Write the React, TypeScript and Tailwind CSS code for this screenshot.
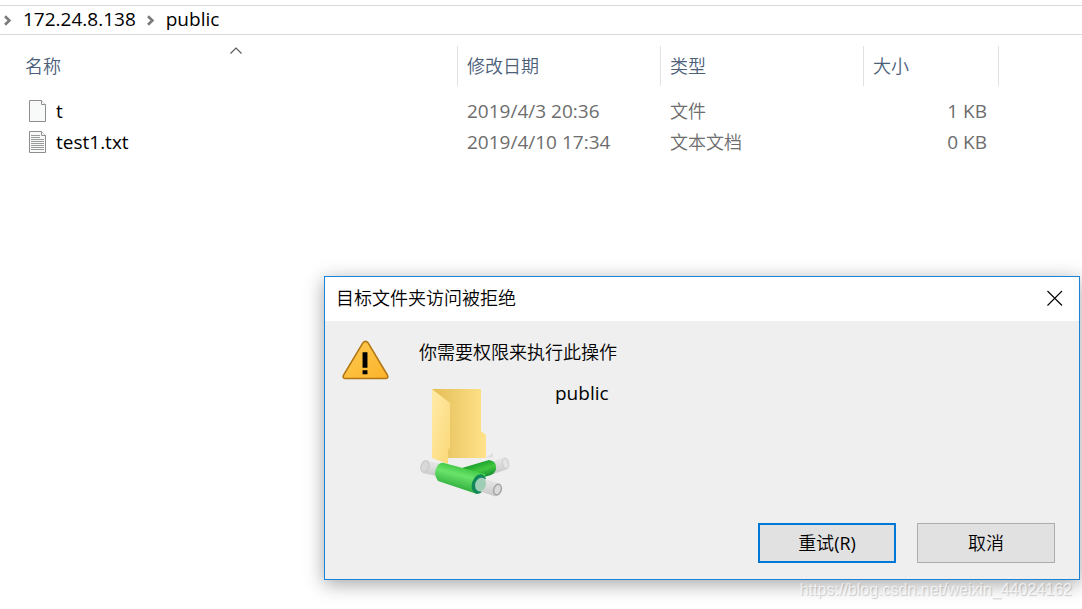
import React from "react";

type FileRow = {
  name: string;
  modified: string;
  kind: string;
  size: string;
  lined: boolean;
};

const files: FileRow[] = [
  { name: "t", modified: "2019/4/3 20:36", kind: "文件", size: "1 KB", lined: false },
  { name: "test1.txt", modified: "2019/4/10 17:34", kind: "文本文档", size: "0 KB", lined: true },
];

function Chevron() {
  return (
    <svg className="h-3 w-2 shrink-0" viewBox="0 0 8 12" fill="none" aria-hidden="true">
      <path d="M1 2.2 L5.4 6.5 L1 10.8" stroke="#7b7b7b" strokeWidth="2.6" />
    </svg>
  );
}

function FileIcon({ lined }: { lined: boolean }) {
  return (
    <svg className="h-[22px] w-[18px] shrink-0" viewBox="0 0 18 22" fill="none" aria-hidden="true">
      <path d="M1.5 .5 H13.5 L17.5 4.5 V21.5 H1.5 Z" fill="#f8f9f9" stroke="#8e8e8e" />
      <path d="M13.5 .5 V4.5 H17.5" fill="#fff" stroke="#8e8e8e" />
      {lined && (
        <path
          d="M3 4.5 H12 M3 6.5 H12 M3 8.5 H16 M3 10.5 H16 M3 12.5 H16 M3 14.5 H16 M3 16.5 H16 M3 18.5 H16"
          stroke="#9a9a9a"
        />
      )}
    </svg>
  );
}

function WarningIcon() {
  return (
    <svg className="h-10 w-[47px] shrink-0" viewBox="0 0 48 40" aria-hidden="true">
      <defs>
        <linearGradient id="warn" x1="0" y1="0" x2="1" y2="1">
          <stop offset="0" stopColor="#ffcb50" />
          <stop offset="1" stopColor="#fbb32b" />
        </linearGradient>
      </defs>
      <path
        d="M21.3 2.6 Q24 -.6 26.7 2.6 L46.4 35.4 Q47.8 38.7 44.5 38.9 H3.5 Q.2 38.7 1.6 35.4 Z"
        fill="url(#warn)"
        stroke="#b37512"
        strokeWidth="1.6"
      />
      <path d="M21 12 H26 V28 H21 Z M21 30.5 H26 V34.5 H21 Z" fill="#000" />
    </svg>
  );
}

function NetworkFolderIcon() {
  return (
    <svg className="h-[112px] w-[92px] shrink-0" viewBox="0 0 92 112" aria-hidden="true">
      <defs>
        <linearGradient id="back" x1="0" y1="0" x2="1" y2="0">
          <stop offset="0" stopColor="#e5be56" />
          <stop offset=".35" stopColor="#edca69" />
          <stop offset="1" stopColor="#ffe28a" />
        </linearGradient>
        <linearGradient id="flap" x1="0" y1="0" x2="1" y2="1">
          <stop offset="0" stopColor="#ffeaa8" />
          <stop offset="1" stopColor="#fbd978" />
        </linearGradient>
        <linearGradient id="green" gradientUnits="userSpaceOnUse" x1="44" y1="79" x2="38" y2="102">
          <stop offset="0" stopColor="#38c43f" />
          <stop offset=".4" stopColor="#6be36b" />
          <stop offset="1" stopColor="#2fae3c" />
        </linearGradient>
        <linearGradient id="branch" gradientUnits="userSpaceOnUse" x1="61" y1="75" x2="66" y2="90">
          <stop offset="0" stopColor="#19a02c" />
          <stop offset=".5" stopColor="#42c840" />
          <stop offset="1" stopColor="#159230" />
        </linearGradient>
        <linearGradient id="pipe" x1="0" y1="0" x2="0" y2="1">
          <stop offset="0" stopColor="#e8e8e8" />
          <stop offset=".4" stopColor="#dedede" />
          <stop offset="1" stopColor="#c6c6c6" />
        </linearGradient>
      </defs>
      <path d="M66 71 L74 66 L74 70 Z" fill="#dedede" />
      <path d="M13 2 H62 V44 L67 48 V71 H13 Z" fill="url(#back)" />
      <path d="M13 2 L31 16 V60 L29 63 V77 L13 71 Z" fill="url(#flap)" />
      <path d="M72 75 L86 70 Q91 71 90 79 Q89 82 86 83 L74 87 Z" fill="url(#pipe)" />
      <ellipse cx="86.5" cy="76.5" rx="3" ry="5" fill="#e4e4e4" stroke="#cbcbcb" transform="rotate(-15 86.5 76.5)" />
      <path d="M43 81 L70 73 Q78 74 77 82 Q76 86 72 88 L52 94 Z" fill="url(#branch)" />
      <path d="M5 73 L22 77 V90 L4 86 Q-1 79 5 73 Z" fill="url(#pipe)" />
      <ellipse cx="6" cy="79.5" rx="4" ry="6" fill="#d8d8d8" stroke="#c6c6c6" transform="rotate(18 6 79.5)" />
      <path d="M25 76 L66 87 Q68 97 58 107 L19 94 Q13 86 19 78 Q22 75 25 76 Z" fill="url(#green)" />
      <ellipse cx="60" cy="97" rx="7" ry="10" fill="#12875a" transform="rotate(18 60 97)" />
      <path d="M63 91 L79 96 Q85 99 82 106 Q79 110 75 109 L60 104 Z" fill="url(#pipe)" />
      <ellipse cx="61.5" cy="97.5" rx="5.3" ry="7" fill="#9fceb6" transform="rotate(18 61.5 97.5)" />
      <ellipse cx="78.5" cy="102.5" rx="3.6" ry="5.4" fill="#dadada" stroke="#a4a4a4" strokeWidth="1.5" transform="rotate(18 78.5 102.5)" />
    </svg>
  );
}

function AccessDeniedDialog() {
  return (
    <section
      role="dialog"
      aria-labelledby="dialog-title"
      className="absolute top-[276px] right-0.5 w-[756px] max-w-full border border-[#1883d7] bg-[#efefef] text-lg text-black shadow-[0_4px_18px_0_rgba(0,0,0,0.36)]"
    >
      <header className="flex h-11 items-center justify-between bg-white pr-4 pb-0.5 pl-[11px]">
        <h1 id="dialog-title" className="font-[350]">目标文件夹访问被拒绝</h1>
        <button type="button" aria-label="关闭" className="flex h-4 w-4 items-center justify-center">
          <svg className="h-4 w-4" viewBox="0 0 16 16" aria-hidden="true">
            <path d="M.5 1 L15 15.5 M15 1 L.5 15.5" stroke="#000" strokeWidth="1.1" />
          </svg>
        </button>
      </header>
      <div className="flex gap-7 px-[17px] pt-[19px]">
        <WarningIcon />
        <div>
          <p className="pl-0.5 leading-6 font-[350]">你需要权限来执行此操作</p>
          <div className="flex gap-11 pt-[17px] pl-0.5">
            <div className="pt-[6px]">
              <NetworkFolderIcon />
            </div>
            <p className="text-[19px] leading-6">public</p>
          </div>
        </div>
      </div>
      <footer className="flex justify-end gap-[21px] px-6 pt-6 pb-4 font-[350]">
        <button type="button" className="h-10 w-[138px] border-2 border-[#0078d7] bg-[#e1e1e1]">
          重试<span className="font-normal">(R)</span>
        </button>
        <button type="button" className="h-10 w-[138px] border border-[#adadad] bg-[#e1e1e1]">
          取消
        </button>
      </footer>
    </section>
  );
}

export default function App() {
  return (
    <div className="relative min-h-screen overflow-hidden bg-white pt-[5px] font-['Open_Sans','Noto_Sans_CJK_SC',sans-serif] text-lg text-black">
      <nav aria-label="路径" className="flex h-[30px] items-center gap-[11px] border-y border-[#d9d9d9] pl-1 text-[19px]">
        <Chevron />
        <a href="#host">172.24.8.138</a>
        <Chevron />
        <a href="#public">public</a>
      </nav>

      <table className="mt-[11px] w-full table-fixed border-separate border-spacing-0 text-left">
        <colgroup>
          <col className="w-[458px]" />
          <col className="w-[203px]" />
          <col className="w-[203px]" />
          <col className="w-[135px]" />
          <col />
        </colgroup>
        <thead className="text-[#4c607a]">
          <tr className="h-10">
            <th className="relative border-r border-[#e2e2e2] p-0 pl-[25px] font-[350]">
              名称
              <svg className="absolute top-0 left-[230px] h-2 w-3" viewBox="0 0 12 8" fill="none" aria-hidden="true">
                <path d="M.5 7.5 L6 2 L11.5 7.5" stroke="#555" strokeWidth="1.1" />
              </svg>
            </th>
            <th className="border-r border-[#e2e2e2] p-0 pl-[9px] font-[350]">修改日期</th>
            <th className="border-r border-[#e2e2e2] p-0 pl-[9px] font-[350]">类型</th>
            <th className="border-r border-[#e2e2e2] p-0 pl-[9px] font-[350]">大小</th>
            <td />
          </tr>
        </thead>
        <tbody className="text-[#6d6d6d]">
          <tr className="h-[9px]" aria-hidden="true">
            <td colSpan={5} className="p-0" />
          </tr>
          {files.map((file) => (
            <tr key={file.name} className="h-[31px]">
              <td className="p-0 pl-7 text-[19px] text-black">
                <div className="flex items-center gap-2.5 leading-6">
                  <FileIcon lined={file.lined} />
                  {file.name}
                </div>
              </td>
              <td className="p-0 pl-[9px] text-[19px] leading-6">{file.modified}</td>
              <td className="p-0 pl-[9px] leading-6 font-[350]">{file.kind}</td>
              <td className="p-0 pr-3 text-right text-[19px] leading-6">{file.size}</td>
              <td />
            </tr>
          ))}
        </tbody>
      </table>

      <AccessDeniedDialog />

      <p className="absolute top-[580px] right-2.5 font-['Liberation_Sans',sans-serif] text-base leading-5 text-white/70 [text-shadow:1px_1px_1px_rgba(0,0,0,0.18)]">
        https://blog.csdn.net/weixin_44024162
      </p>
    </div>
  );
}
